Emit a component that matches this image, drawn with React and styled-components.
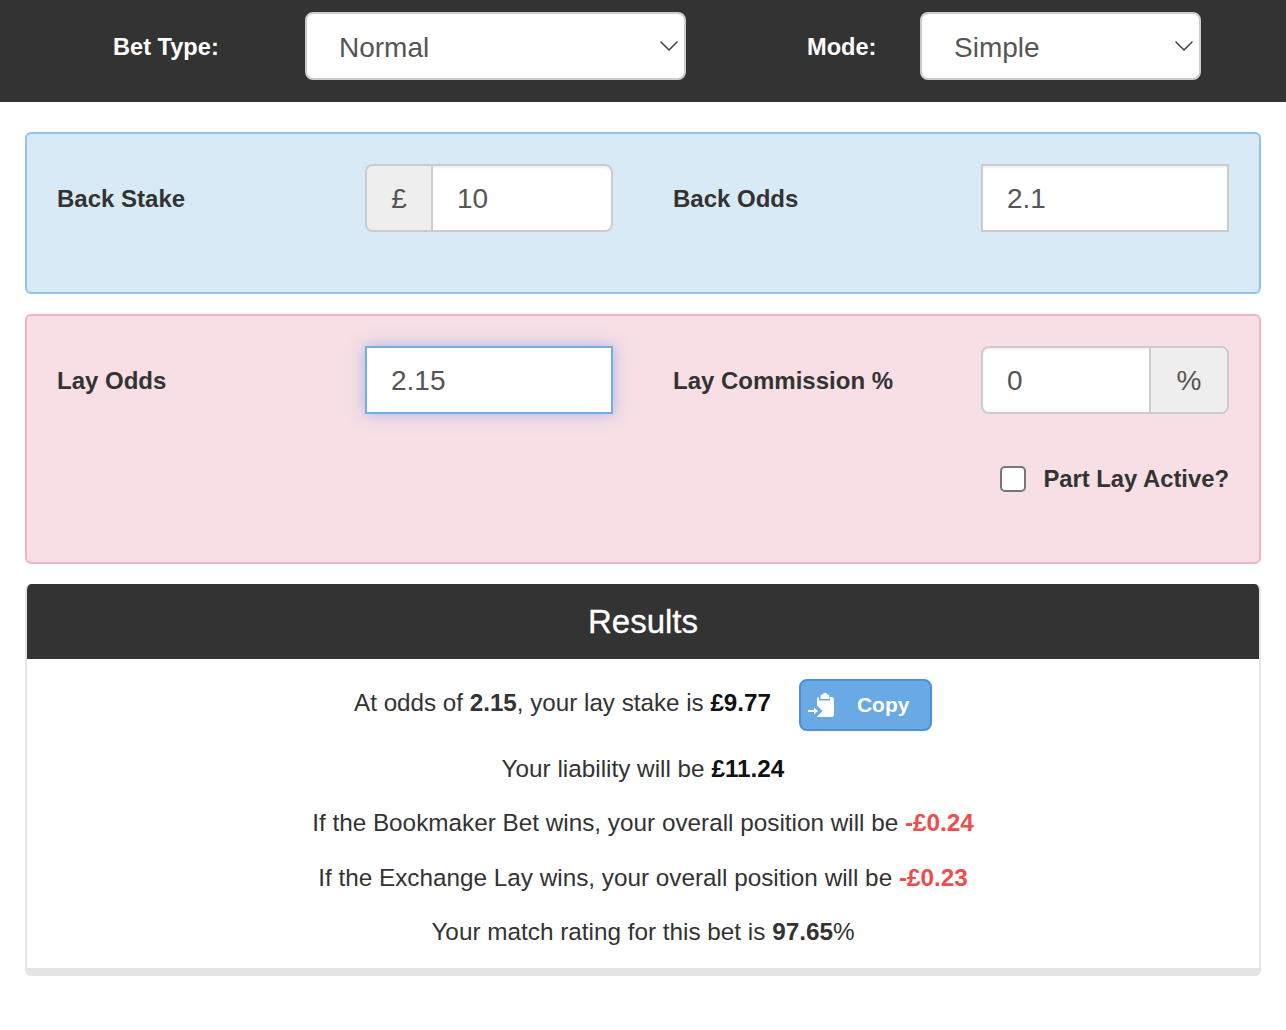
import styled, { createGlobalStyle } from "styled-components";
import { ChevronDown } from "lucide-react";

const Global = createGlobalStyle`
  * { box-sizing: border-box; }
  body {
    margin: 0;
    background: #fff;
    color: #333;
    font-family: "Liberation Sans", Arial, sans-serif;
    font-size: 24.3px;
  }
`;

const Header = styled.header`
  display: flex;
  align-items: center;
  height: 102px;
  padding: 0 0 10px 113px;
  background: #333;
`;

const HeaderLabel = styled.label`
  width: ${(p) => p.$width}px;
  margin-left: ${(p) => p.$offset || 0}px;
  padding-top: 2px;
  color: #fff;
  font-weight: bold;
  font-size: 23.6px;
`;

const SelectWrap = styled.div`
  position: relative;
  width: ${(p) => p.$width}px;
  height: 68px;
`;

const Select = styled.select`
  width: 100%;
  height: 100%;
  padding: 2px 32px 0;
  appearance: none;
  background: #fff;
  border: 2px solid #ccc;
  border-radius: 8px;
  color: #555;
  font-family: inherit;
  font-size: 28px;
`;

const Chevron = styled(ChevronDown)`
  position: absolute;
  top: 18px;
  right: 1px;
  color: #444;
  pointer-events: none;
`;

const Main = styled.main`
  display: flex;
  flex-direction: column;
  gap: 20px;
  padding: 30px 25px 0;
`;

const Panel = styled.section`
  display: grid;
  grid-template-columns: 308px 248px 308px 248px;
  padding: 30px 30px ${(p) => p.$bottom}px;
  background: ${(p) => p.$bg};
  border: 2px solid ${(p) => p.$line};
  border-radius: 6px;
`;

const FieldLabel = styled.label`
  display: flex;
  align-items: center;
  height: 68px;
  padding-top: 2px;
  margin-left: ${(p) => (p.$second ? 60 : 0)}px;
  margin-right: ${(p) => (p.$second ? -60 : 0)}px;
  font-weight: bold;
  font-size: 24px;
  white-space: nowrap;
`;

const InputGroup = styled.div`
  display: flex;
  height: 68px;
  margin-left: ${(p) => (p.$second ? 60 : 0)}px;
  margin-right: ${(p) => (p.$second ? -60 : 0)}px;
  background: #fff;
  border: 2px solid #ccc;
  border-radius: ${(p) => (p.$square ? 0 : 8)}px;
  box-shadow: inset 0 2px 2px rgba(0, 0, 0, 0.06);
  overflow: hidden;
`;

const FocusGroup = styled(InputGroup)`
  border-color: #74ace6;
  overflow: visible;
  box-shadow: 0 0 14px rgba(102, 150, 233, 0.55);
`;

const Input = styled.input`
  flex: 1;
  min-width: 0;
  padding: 2px 24px 0;
  background: transparent;
  border: 0;
  outline: 0;
  color: #555;
  font-family: inherit;
  font-size: 28px;
`;

const Addon = styled.span`
  display: flex;
  align-items: center;
  justify-content: center;
  width: ${(p) => p.$width}px;
  padding-top: 2px;
  background: #eee;
  color: #555;
  font-size: 28px;
  border-${(p) => p.$side}: 2px solid #ccc;
`;

const PartLay = styled.label`
  grid-column: 4;
  display: flex;
  align-items: center;
  justify-content: flex-end;
  gap: 17px;
  height: 28px;
  margin: 51px -60px 0 0;
  font-weight: bold;
  font-size: 23.8px;
  white-space: nowrap;
`;

const Checkbox = styled.input`
  width: 26px;
  height: 26px;
  margin: 0;
  appearance: none;
  background: #fff;
  border: 2px solid #767676;
  border-radius: 5px;
`;

const Results = styled.section`
  border: 2px solid #e5e5e5;
  border-top: 0;
  border-bottom-width: 8px;
  border-radius: 6px;
  overflow: hidden;
  padding-bottom: 22px;
`;

const ResultsTitle = styled.h2`
  margin: 0;
  height: 75px;
  background: #333;
  color: #fff;
  font-size: 33px;
  font-weight: normal;
  line-height: 76px;
  text-align: center;
  -webkit-text-stroke: 0.3px #fff;
`;

const Line = styled.p`
  margin: ${(p) => p.$top}px 0 0;
  height: 28px;
  line-height: 28px;
  font-size: 24.3px;
  text-align: center;
`;

const StakeRow = styled.div`
  display: flex;
  align-items: center;
  justify-content: center;
  gap: 28px;
  margin-top: 20px;
`;

const StakeText = styled.span`
  margin-top: -4px;
  font-size: 24.2px;
`;

const Strong = styled.b`
  color: ${(p) => p.$color || "#333"};
`;

const CopyButton = styled.button`
  display: flex;
  align-items: center;
  width: 133px;
  height: 52px;
  padding: 0 0 0 7px;
  background: #6aaae4;
  border: 2px solid #4a90e2;
  border-radius: 8px;
  color: #fff;
  font-family: inherit;
  font-weight: bold;
  font-size: 21px;
`;

const CopyIcon = styled.svg`
  width: 28px;
  height: 28px;
  margin-right: 21px;
  fill: #fff;
`;

function ClipboardIcon() {
  return (
    <CopyIcon viewBox="0 0 28 28">
      <path d="M11 6v3.500h11V6h2a2 2 0 0 1 2 2v16a2 2 0 0 1-2 2H9v-.5l5.500-5.500L9 14.500V8a2 2 0 0 1 2-2z" />
      <path d="M12.500 8V5A1.500 1.500 0 0 1 14 3.500h.8a2.400 2.400 0 0 1 4.600 0h.6A1.500 1.500 0 0 1 21.500 5v3z" />
      <path d="M0 19h6v-2.500l4 3.500-4 3.500V21H0z" />
    </CopyIcon>
  );
}

export default function App() {
  return (
    <>
      <Global />
      <Header>
        <HeaderLabel $width={192}>Bet Type:</HeaderLabel>
        <SelectWrap $width={381}>
          <Select defaultValue="Normal">
            <option>Normal</option>
            <option>Each Way</option>
          </Select>
          <Chevron size={32} strokeWidth={1.2} />
        </SelectWrap>
        <HeaderLabel $width={113} $offset={121}>Mode:</HeaderLabel>
        <SelectWrap $width={281}>
          <Select defaultValue="Simple">
            <option>Simple</option>
            <option>Advanced</option>
          </Select>
          <Chevron size={32} strokeWidth={1.2} />
        </SelectWrap>
      </Header>
      <Main>
        <Panel $bg="#d9eaf7" $line="#90c4ec" $bottom={60}>
          <FieldLabel>Back Stake</FieldLabel>
          <InputGroup>
            <Addon $width={66} $side="right">£</Addon>
            <Input defaultValue="10" />
          </InputGroup>
          <FieldLabel $second>Back Odds</FieldLabel>
          <InputGroup $second $square>
            <Input defaultValue="2.1" />
          </InputGroup>
        </Panel>
        <Panel $bg="#f7dfe5" $line="#f0b4c2" $bottom={69}>
          <FieldLabel>Lay Odds</FieldLabel>
          <FocusGroup $square>
            <Input defaultValue="2.15" />
          </FocusGroup>
          <FieldLabel $second>Lay Commission %</FieldLabel>
          <InputGroup $second>
            <Input defaultValue="0" />
            <Addon $width={78} $side="left">%</Addon>
          </InputGroup>
          <PartLay>
            <Checkbox type="checkbox" />
            Part Lay Active?
          </PartLay>
        </Panel>
        <Results>
          <ResultsTitle>Results</ResultsTitle>
          <StakeRow>
            <StakeText>
              At odds of <Strong>2.15</Strong>, your lay stake is <Strong $color="#111">£9.77</Strong>
            </StakeText>
            <CopyButton>
              <ClipboardIcon />
              Copy
            </CopyButton>
          </StakeRow>
          <Line $top={24}>Your liability will be <Strong $color="#111">£11.24</Strong></Line>
          <Line $top={26}>
            If the Bookmaker Bet wins, your overall position will be <Strong $color="#ef4c4c">-£0.24</Strong>
          </Line>
          <Line $top={27}>
            If the Exchange Lay wins, your overall position will be <Strong $color="#ef4c4c">-£0.23</Strong>
          </Line>
          <Line $top={26}>Your match rating for this bet is <Strong>97.65</Strong>%</Line>
        </Results>
      </Main>
    </>
  );
}
